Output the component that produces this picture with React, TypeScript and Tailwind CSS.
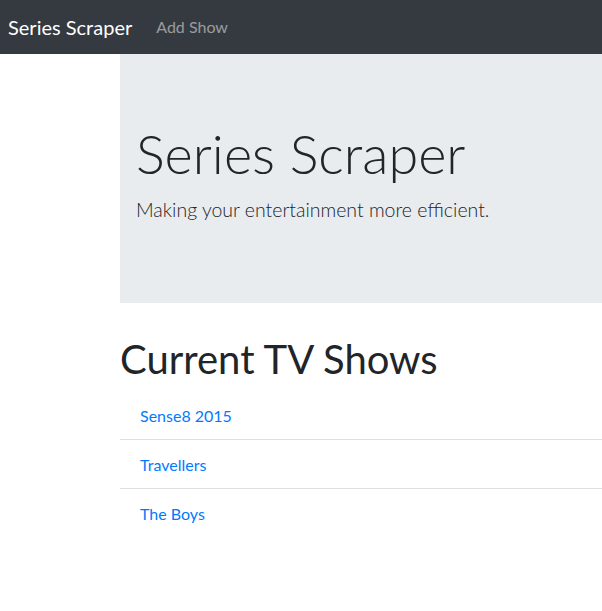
export default function App() {
  const shows = ['Sense8 2015', 'Travellers', 'The Boys'];
  return (
    <div className="min-h-[611px] bg-white text-[#212529] font-['Lato',sans-serif] overflow-hidden">
      <nav className="h-[54px] bg-[#343a40] flex items-center px-2">
        <a href="#" className="text-white text-[20px] leading-[30px] mr-4">Series Scraper</a>
        <a href="#" className="text-white/50 text-base leading-6 px-2">Add Show</a>
      </nav>

      <div className="ml-[120px]">
        <div className="bg-[#e9ecef] pt-[66px] pb-[62px] px-4 mb-8">
          <h1 className="text-[54px] leading-[67px] font-light mb-2">Series Scraper</h1>
          <p className="text-[19.5px] leading-[30px] font-light mb-4">Making your entertainment more efficient.</p>
        </div>

        <h1 className="text-[40px] leading-[48px] mb-2 pt-[2px] -mt-[2px]">Current TV Shows</h1>
        <ul>
          {shows.map((s, i) => (
            <li key={s} className={`px-5 pt-[13px] pb-[11px] leading-6 ${i > 0 ? 'border-t border-black/[.125]' : ''}`}>
              <a href="#" className="text-[#007bff]">{s}</a>
            </li>
          ))}
        </ul>
      </div>
    </div>
  );
}
